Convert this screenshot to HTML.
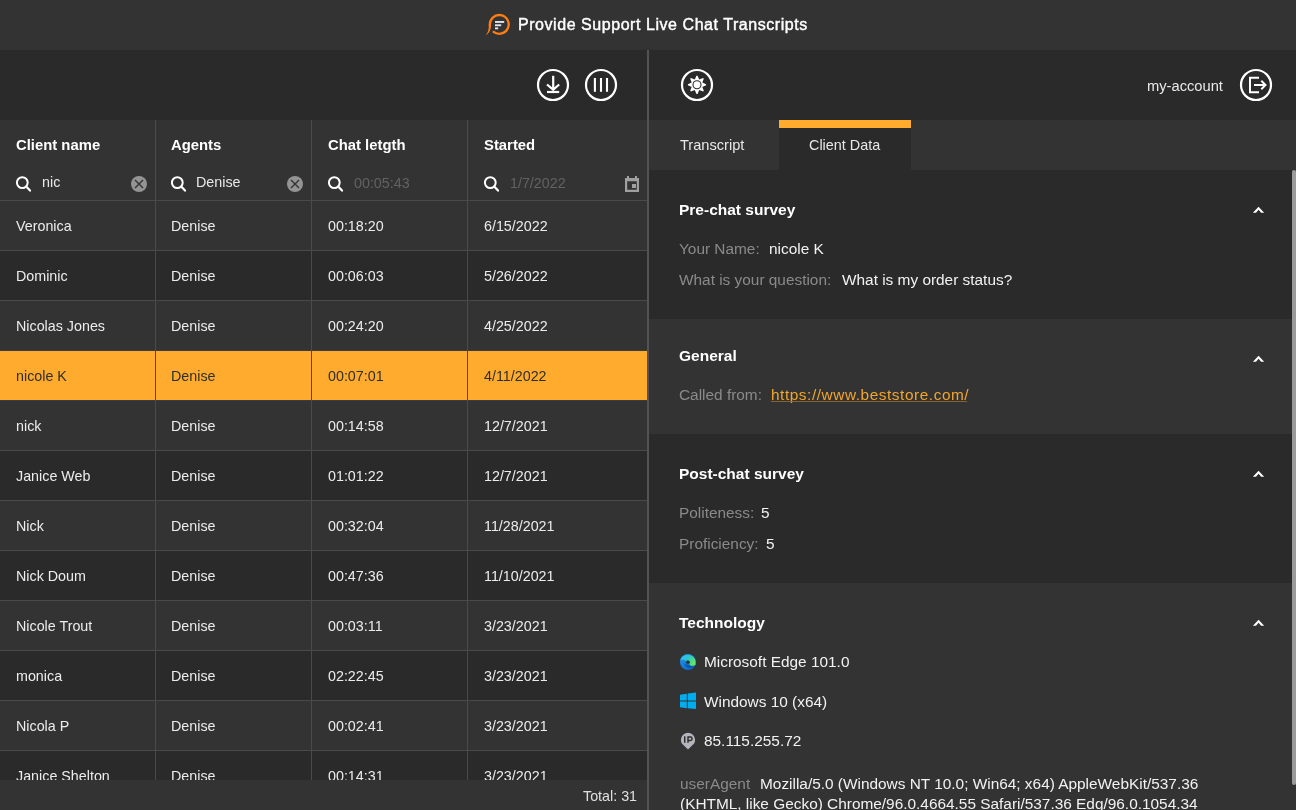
<!DOCTYPE html><html><head><meta charset="utf-8"><style>
html,body{margin:0;padding:0;}
body{width:1296px;height:810px;overflow:hidden;position:relative;background:#2a2a2a;font-family:"Liberation Sans",sans-serif;}
.t{position:absolute;line-height:1;white-space:pre;will-change:transform;}
.r{position:absolute;}
svg{position:absolute;overflow:visible;}
</style></head><body>
<div class="r" style="left:0px;top:0px;width:1296px;height:50px;background:#333333;"></div>
<svg style="left:0;top:0" width="1296" height="50">
<path d="M493.6 31.9 A9.4 9.4 0 1 0 489.9 25.3" fill="none" stroke="#ff7d13" stroke-width="2.3" stroke-linecap="round"/>
<path d="M488.75 24.8 C488.9 29.5 488.2 32.4 485.7 35.2 C488.8 33.4 490.9 30.6 491.05 25.2 Z" fill="#ff7d13"/>
<rect x="495" y="21" width="9.2" height="1.9" fill="#dfe3ec"/>
<rect x="495" y="24.3" width="6.2" height="1.9" fill="#dfe3ec"/>
<rect x="495" y="27.4" width="3.2" height="1.9" fill="#dfe3ec"/>
</svg>
<div class="t " style="left:518px;top:17.46px;font-size:16px;color:#ffffff;font-weight:400;letter-spacing:0.55px;-webkit-text-stroke:0.42px #fff;">Provide Support Live Chat Transcripts</div>
<div class="r" style="left:0px;top:50px;width:647px;height:70px;background:#2a2a2a;"></div>
<div class="r" style="left:649px;top:50px;width:647px;height:70px;background:#2a2a2a;"></div>
<div class="r" style="left:647px;top:50px;width:2px;height:760px;background:#535353;"></div>
<svg style="left:0;top:0" width="1296" height="120">
<circle cx="553" cy="85" r="15" fill="none" stroke="#fff" stroke-width="2.2"/>
<line x1="553.2" y1="75.8" x2="553.2" y2="89" stroke="#fff" stroke-width="2.2"/>
<polyline points="547,84.5 553.2,89.7 559.2,84.5" fill="none" stroke="#fff" stroke-width="2.2"/>
<line x1="547" y1="92" x2="559.2" y2="92" stroke="#fff" stroke-width="2.2"/>
<circle cx="601" cy="85" r="15" fill="none" stroke="#fff" stroke-width="2.2"/>
<line x1="594.9" y1="78" x2="594.9" y2="91.8" stroke="#fff" stroke-width="2.1"/>
<line x1="601" y1="78" x2="601" y2="91.8" stroke="#fff" stroke-width="2.1"/>
<line x1="607" y1="78" x2="607" y2="91.8" stroke="#fff" stroke-width="2.1"/>
<circle cx="697" cy="85" r="15" fill="none" stroke="#fff" stroke-width="2.2"/>
<g transform="translate(697 84.8)">
<path d="M-2.20,-5.31 L-0.56,-9.08 L0.56,-9.08 L2.20,-5.31 L6.03,-6.82 L6.82,-6.03 L5.31,-2.20 L9.08,-0.56 L9.08,0.56 L5.31,2.20 L6.82,6.03 L6.03,6.82 L2.20,5.31 L0.56,9.08 L-0.56,9.08 L-2.20,5.31 L-6.03,6.82 L-6.82,6.03 L-5.31,2.20 L-9.08,0.56 L-9.08,-0.56 L-5.31,-2.20 L-6.82,-6.03 L-6.03,-6.82 Z" fill="#fff"/>
<circle r="4.55" fill="#2a2a2a"/>
<circle r="3.45" fill="#fff"/>
</g>
<circle cx="1256" cy="85" r="15" fill="none" stroke="#fff" stroke-width="2.2"/>
<polyline points="1259,77.8 1250,77.8 1250,92.2 1259,92.2" fill="none" stroke="#fff" stroke-width="2"/>
<line x1="1254" y1="85" x2="1265" y2="85" stroke="#fff" stroke-width="2"/>
<polyline points="1261.3,80.8 1265.5,85 1261.3,89.2" fill="none" stroke="#fff" stroke-width="2"/>
</svg>
<div class="t " style="left:1147px;top:79.16px;font-size:14.7px;color:#e8e8e8;font-weight:400;">my-account</div>
<div class="r" style="left:0px;top:120px;width:647px;height:80px;background:#333333;"></div>
<div class="t " style="left:16px;top:138.13px;font-size:14.85px;color:#ffffff;font-weight:700;">Client name</div>
<div class="t " style="left:171px;top:138.13px;font-size:14.85px;color:#ffffff;font-weight:700;">Agents</div>
<div class="t " style="left:328px;top:138.13px;font-size:14.85px;color:#ffffff;font-weight:700;">Chat letgth</div>
<div class="t " style="left:484px;top:138.13px;font-size:14.85px;color:#ffffff;font-weight:700;">Started</div>
<div class="r" style="left:0px;top:200px;width:647px;height:50px;background:#333333;"></div>
<div class="t " style="left:16px;top:218.90px;font-size:14.3px;color:#ececec;font-weight:400;">Veronica</div>
<div class="t " style="left:171px;top:218.90px;font-size:14.3px;color:#ececec;font-weight:400;">Denise</div>
<div class="t " style="left:328px;top:218.90px;font-size:14.3px;color:#ececec;font-weight:400;">00:18:20</div>
<div class="t " style="left:484px;top:218.90px;font-size:14.3px;color:#ececec;font-weight:400;">6/15/2022</div>
<div class="r" style="left:0px;top:250px;width:647px;height:50px;background:#2a2a2a;"></div>
<div class="t " style="left:16px;top:268.90px;font-size:14.3px;color:#ececec;font-weight:400;">Dominic</div>
<div class="t " style="left:171px;top:268.90px;font-size:14.3px;color:#ececec;font-weight:400;">Denise</div>
<div class="t " style="left:328px;top:268.90px;font-size:14.3px;color:#ececec;font-weight:400;">00:06:03</div>
<div class="t " style="left:484px;top:268.90px;font-size:14.3px;color:#ececec;font-weight:400;">5/26/2022</div>
<div class="r" style="left:0px;top:300px;width:647px;height:50px;background:#333333;"></div>
<div class="t " style="left:16px;top:318.90px;font-size:14.3px;color:#ececec;font-weight:400;">Nicolas Jones</div>
<div class="t " style="left:171px;top:318.90px;font-size:14.3px;color:#ececec;font-weight:400;">Denise</div>
<div class="t " style="left:328px;top:318.90px;font-size:14.3px;color:#ececec;font-weight:400;">00:24:20</div>
<div class="t " style="left:484px;top:318.90px;font-size:14.3px;color:#ececec;font-weight:400;">4/25/2022</div>
<div class="r" style="left:0px;top:350px;width:647px;height:50px;background:#ffac2e;"></div>
<div class="t " style="left:16px;top:368.90px;font-size:14.3px;color:#2e2e2e;font-weight:400;">nicole K</div>
<div class="t " style="left:171px;top:368.90px;font-size:14.3px;color:#2e2e2e;font-weight:400;">Denise</div>
<div class="t " style="left:328px;top:368.90px;font-size:14.3px;color:#2e2e2e;font-weight:400;">00:07:01</div>
<div class="t " style="left:484px;top:368.90px;font-size:14.3px;color:#2e2e2e;font-weight:400;">4/11/2022</div>
<div class="r" style="left:0px;top:400px;width:647px;height:50px;background:#333333;"></div>
<div class="t " style="left:16px;top:418.90px;font-size:14.3px;color:#ececec;font-weight:400;">nick</div>
<div class="t " style="left:171px;top:418.90px;font-size:14.3px;color:#ececec;font-weight:400;">Denise</div>
<div class="t " style="left:328px;top:418.90px;font-size:14.3px;color:#ececec;font-weight:400;">00:14:58</div>
<div class="t " style="left:484px;top:418.90px;font-size:14.3px;color:#ececec;font-weight:400;">12/7/2021</div>
<div class="r" style="left:0px;top:450px;width:647px;height:50px;background:#2a2a2a;"></div>
<div class="t " style="left:16px;top:468.90px;font-size:14.3px;color:#ececec;font-weight:400;">Janice Web</div>
<div class="t " style="left:171px;top:468.90px;font-size:14.3px;color:#ececec;font-weight:400;">Denise</div>
<div class="t " style="left:328px;top:468.90px;font-size:14.3px;color:#ececec;font-weight:400;">01:01:22</div>
<div class="t " style="left:484px;top:468.90px;font-size:14.3px;color:#ececec;font-weight:400;">12/7/2021</div>
<div class="r" style="left:0px;top:500px;width:647px;height:50px;background:#333333;"></div>
<div class="t " style="left:16px;top:518.90px;font-size:14.3px;color:#ececec;font-weight:400;">Nick</div>
<div class="t " style="left:171px;top:518.90px;font-size:14.3px;color:#ececec;font-weight:400;">Denise</div>
<div class="t " style="left:328px;top:518.90px;font-size:14.3px;color:#ececec;font-weight:400;">00:32:04</div>
<div class="t " style="left:484px;top:518.90px;font-size:14.3px;color:#ececec;font-weight:400;">11/28/2021</div>
<div class="r" style="left:0px;top:550px;width:647px;height:50px;background:#2a2a2a;"></div>
<div class="t " style="left:16px;top:568.90px;font-size:14.3px;color:#ececec;font-weight:400;">Nick Doum</div>
<div class="t " style="left:171px;top:568.90px;font-size:14.3px;color:#ececec;font-weight:400;">Denise</div>
<div class="t " style="left:328px;top:568.90px;font-size:14.3px;color:#ececec;font-weight:400;">00:47:36</div>
<div class="t " style="left:484px;top:568.90px;font-size:14.3px;color:#ececec;font-weight:400;">11/10/2021</div>
<div class="r" style="left:0px;top:600px;width:647px;height:50px;background:#333333;"></div>
<div class="t " style="left:16px;top:618.90px;font-size:14.3px;color:#ececec;font-weight:400;">Nicole Trout</div>
<div class="t " style="left:171px;top:618.90px;font-size:14.3px;color:#ececec;font-weight:400;">Denise</div>
<div class="t " style="left:328px;top:618.90px;font-size:14.3px;color:#ececec;font-weight:400;">00:03:11</div>
<div class="t " style="left:484px;top:618.90px;font-size:14.3px;color:#ececec;font-weight:400;">3/23/2021</div>
<div class="r" style="left:0px;top:650px;width:647px;height:50px;background:#2a2a2a;"></div>
<div class="t " style="left:16px;top:668.90px;font-size:14.3px;color:#ececec;font-weight:400;">monica</div>
<div class="t " style="left:171px;top:668.90px;font-size:14.3px;color:#ececec;font-weight:400;">Denise</div>
<div class="t " style="left:328px;top:668.90px;font-size:14.3px;color:#ececec;font-weight:400;">02:22:45</div>
<div class="t " style="left:484px;top:668.90px;font-size:14.3px;color:#ececec;font-weight:400;">3/23/2021</div>
<div class="r" style="left:0px;top:700px;width:647px;height:50px;background:#333333;"></div>
<div class="t " style="left:16px;top:718.90px;font-size:14.3px;color:#ececec;font-weight:400;">Nicola P</div>
<div class="t " style="left:171px;top:718.90px;font-size:14.3px;color:#ececec;font-weight:400;">Denise</div>
<div class="t " style="left:328px;top:718.90px;font-size:14.3px;color:#ececec;font-weight:400;">00:02:41</div>
<div class="t " style="left:484px;top:718.90px;font-size:14.3px;color:#ececec;font-weight:400;">3/23/2021</div>
<div class="r" style="left:0px;top:750px;width:647px;height:50px;background:#2a2a2a;"></div>
<div class="t " style="left:16px;top:768.90px;font-size:14.3px;color:#ececec;font-weight:400;">Janice Shelton</div>
<div class="t " style="left:171px;top:768.90px;font-size:14.3px;color:#ececec;font-weight:400;">Denise</div>
<div class="t " style="left:328px;top:768.90px;font-size:14.3px;color:#ececec;font-weight:400;">00:14:31</div>
<div class="t " style="left:484px;top:768.90px;font-size:14.3px;color:#ececec;font-weight:400;">3/23/2021</div>
<div class="r" style="left:0px;top:200px;width:647px;height:1px;background:#4a4a4a;"></div>
<div class="r" style="left:0px;top:250px;width:647px;height:1px;background:#4a4a4a;"></div>
<div class="r" style="left:0px;top:300px;width:647px;height:1px;background:#4a4a4a;"></div>
<div class="r" style="left:0px;top:350px;width:647px;height:1px;background:#3a3d44;"></div>
<div class="r" style="left:0px;top:400px;width:647px;height:1px;background:#3a3d44;"></div>
<div class="r" style="left:0px;top:450px;width:647px;height:1px;background:#4a4a4a;"></div>
<div class="r" style="left:0px;top:500px;width:647px;height:1px;background:#4a4a4a;"></div>
<div class="r" style="left:0px;top:550px;width:647px;height:1px;background:#4a4a4a;"></div>
<div class="r" style="left:0px;top:600px;width:647px;height:1px;background:#4a4a4a;"></div>
<div class="r" style="left:0px;top:650px;width:647px;height:1px;background:#4a4a4a;"></div>
<div class="r" style="left:0px;top:700px;width:647px;height:1px;background:#4a4a4a;"></div>
<div class="r" style="left:0px;top:750px;width:647px;height:1px;background:#4a4a4a;"></div>
<div class="r" style="left:155px;top:120px;width:1px;height:660px;background:#4a4a4a;"></div>
<div class="r" style="left:155px;top:351px;width:1px;height:49px;background:#484848;"></div>
<div class="r" style="left:311px;top:120px;width:1px;height:660px;background:#4a4a4a;"></div>
<div class="r" style="left:311px;top:351px;width:1px;height:49px;background:#484848;"></div>
<div class="r" style="left:467px;top:120px;width:1px;height:660px;background:#4a4a4a;"></div>
<div class="r" style="left:467px;top:351px;width:1px;height:49px;background:#484848;"></div>
<svg style="left:0;top:0" width="647" height="200"><circle cx="22.3" cy="182.6" r="5.4" fill="none" stroke="#fff" stroke-width="2"/><line x1="26.2" y1="186.6" x2="30" y2="190.6" stroke="#fff" stroke-width="2.2" stroke-linecap="round"/><circle cx="177.3" cy="182.6" r="5.4" fill="none" stroke="#fff" stroke-width="2"/><line x1="181.2" y1="186.6" x2="185" y2="190.6" stroke="#fff" stroke-width="2.2" stroke-linecap="round"/><circle cx="334.3" cy="182.6" r="5.4" fill="none" stroke="#fff" stroke-width="2"/><line x1="338.2" y1="186.6" x2="342" y2="190.6" stroke="#fff" stroke-width="2.2" stroke-linecap="round"/><circle cx="490.3" cy="182.6" r="5.4" fill="none" stroke="#fff" stroke-width="2"/><line x1="494.2" y1="186.6" x2="498" y2="190.6" stroke="#fff" stroke-width="2.2" stroke-linecap="round"/><circle cx="139" cy="184" r="8" fill="#949494"/><path d="M135 180 L143 188 M143 180 L135 188" stroke="#333" stroke-width="1.4"/><circle cx="295" cy="184" r="8" fill="#949494"/><path d="M291 180 L299 188 M299 180 L291 188" stroke="#333" stroke-width="1.4"/><path d="M625 178 H639 V192 H625 Z M627.2 181.2 V189.8 H636.8 V181.2 Z" fill="#a0a0a0" fill-rule="evenodd"/><rect x="627" y="176" width="2" height="2.5" fill="#a0a0a0"/><rect x="635" y="176" width="2" height="2.5" fill="#a0a0a0"/><rect x="632" y="184" width="4" height="4" fill="#a0a0a0"/></svg>
<div class="t " style="left:41.5px;top:174.90px;font-size:14.3px;color:#e8e8e8;font-weight:400;">nic</div>
<div class="t " style="left:196px;top:174.90px;font-size:14.3px;color:#e8e8e8;font-weight:400;">Denise</div>
<div class="t " style="left:354px;top:176.40px;font-size:14.3px;color:#626262;font-weight:400;">00:05:43</div>
<div class="t " style="left:510px;top:176.40px;font-size:14.3px;color:#626262;font-weight:400;">1/7/2022</div>
<div class="r" style="left:0px;top:780px;width:647px;height:30px;background:#333333;"></div>
<div class="t" style="right:659px;top:788.90px;font-size:14.3px;color:#e0e0e0">Total: 31</div>
<div class="r" style="left:649px;top:120px;width:647px;height:50px;background:#333333;"></div>
<div class="r" style="left:779px;top:120px;width:132px;height:50px;background:#2a2a2a;"></div>
<div class="r" style="left:779px;top:120px;width:132px;height:8px;background:#ffac2e;"></div>
<div class="t " style="left:680.4px;top:137.64px;font-size:14.6px;color:#e8e8e8;font-weight:400;">Transcript</div>
<div class="t " style="left:809.3px;top:137.81px;font-size:14.4px;color:#e8e8e8;font-weight:400;">Client Data</div>
<div class="r" style="left:649px;top:170px;width:643px;height:149px;background:#2a2a2a;"></div>
<div class="r" style="left:649px;top:319px;width:643px;height:115px;background:#333333;"></div>
<div class="r" style="left:649px;top:434px;width:643px;height:149px;background:#2a2a2a;"></div>
<div class="r" style="left:649px;top:583px;width:643px;height:227px;background:#333333;"></div>
<div class="r" style="left:1292px;top:170px;width:4px;height:640px;background:#333333;"></div>
<div class="r" style="left:1292px;top:170px;width:4px;height:615px;background:#9a9a9a;border-radius:2px;"></div>
<svg style="left:0;top:0" width="1296" height="810"><path d="M1252.9 212.7 L1258.55 206.7 L1264.2 212.7 L1261.1 212.7 L1258.55 209.8 L1256 212.7 Z" fill="#fff"/><path d="M1252.9 361.7 L1258.55 355.7 L1264.2 361.7 L1261.1 361.7 L1258.55 358.8 L1256 361.7 Z" fill="#fff"/><path d="M1252.9 476.7 L1258.55 470.7 L1264.2 476.7 L1261.1 476.7 L1258.55 473.8 L1256 476.7 Z" fill="#fff"/><path d="M1252.9 625.7 L1258.55 619.7 L1264.2 625.7 L1261.1 625.7 L1258.55 622.8 L1256 625.7 Z" fill="#fff"/></svg>
<div class="t " style="left:678.8px;top:201.88px;font-size:15.5px;color:#ffffff;font-weight:700;">Pre-chat survey</div>
<div class="t " style="left:678.8px;top:347.88px;font-size:15.5px;color:#ffffff;font-weight:700;">General</div>
<div class="t " style="left:678.8px;top:465.88px;font-size:15.5px;color:#ffffff;font-weight:700;">Post-chat survey</div>
<div class="t " style="left:678.8px;top:614.88px;font-size:15.5px;color:#ffffff;font-weight:700;">Technology</div>
<div class="t " style="left:678.8px;top:240.96px;font-size:15.4px;color:#8a8a8a;font-weight:400;">Your Name:</div>
<div class="t " style="left:768.5px;top:240.96px;font-size:15.4px;color:#f2f2f2;font-weight:400;">nicole K</div>
<div class="t " style="left:678.8px;top:271.96px;font-size:15.4px;color:#8a8a8a;font-weight:400;">What is your question:</div>
<div class="t " style="left:842.3px;top:271.96px;font-size:15.4px;color:#f2f2f2;font-weight:400;">What is my order status?</div>
<div class="t " style="left:678.8px;top:386.96px;font-size:15.4px;color:#8a8a8a;font-weight:400;">Called from:</div>
<div class="t " style="left:771.2px;top:386.96px;font-size:15.4px;color:#f2a62e;font-weight:400;letter-spacing:0.55px;">https://www.beststore.com/</div>
<div class="r" style="left:771px;top:401px;width:196px;height:1px;background:#8a6228;"></div>
<div class="t " style="left:678.8px;top:504.96px;font-size:15.4px;color:#8a8a8a;font-weight:400;">Politeness:</div>
<div class="t " style="left:761.3px;top:504.96px;font-size:15.4px;color:#f2f2f2;font-weight:400;">5</div>
<div class="t " style="left:678.8px;top:535.96px;font-size:15.4px;color:#8a8a8a;font-weight:400;">Proficiency:</div>
<div class="t " style="left:765.8px;top:535.96px;font-size:15.4px;color:#f2f2f2;font-weight:400;">5</div>
<div class="t " style="left:703.5px;top:653.96px;font-size:15.4px;color:#f2f2f2;font-weight:400;">Microsoft Edge 101.0</div>
<div class="t " style="left:703.8px;top:693.96px;font-size:15.4px;color:#f2f2f2;font-weight:400;">Windows 10 (x64)</div>
<div class="t " style="left:703.8px;top:733.46px;font-size:15.4px;color:#f2f2f2;font-weight:400;">85.115.255.72</div>
<div class="t " style="left:680.4px;top:775.96px;font-size:15.4px;color:#8a8a8a;font-weight:400;">userAgent</div>
<div class="t " style="left:759.8px;top:775.96px;font-size:15.4px;color:#f2f2f2;font-weight:400;">Mozilla/5.0 (Windows NT 10.0; Win64; x64) AppleWebKit/537.36</div>
<div class="t " style="left:680.4px;top:795.96px;font-size:15.4px;color:#f2f2f2;font-weight:400;">(KHTML, like Gecko) Chrome/96.0.4664.55 Safari/537.36 Edg/96.0.1054.34</div>
<svg style="left:0;top:0" width="1296" height="810">
<defs>
<linearGradient id="eg1" x1="0" y1="0" x2="1" y2="0.6"><stop offset="0" stop-color="#2ec9f2"/><stop offset="0.45" stop-color="#2cc2d8"/><stop offset="0.75" stop-color="#48d98a"/><stop offset="1" stop-color="#64e868"/></linearGradient>
<linearGradient id="eg2" x1="0" y1="0.2" x2="0.7" y2="1"><stop offset="0" stop-color="#1f95ea"/><stop offset="1" stop-color="#0d66c6"/></linearGradient>
</defs>
<g transform="translate(680 654)">
<circle cx="8" cy="8" r="8" fill="url(#eg2)"/>
<path d="M0.2 6.2 A8 8 0 0 1 15.6 10.4 C14.8 12 12 12.2 10.6 11.4 C9.7 10.9 9.3 10.2 9.6 9.2 A1.9 1.9 0 0 0 6.2 7.2 C5 6.1 3 5.4 0.2 6.2 Z" fill="url(#eg1)"/>
<path d="M4.4 9.4 C4.8 13 9 14.9 12.6 13.3 C14 12.6 15 11.6 15.6 10.4 C14.5 12.2 12 12.6 10.2 11.8 C8.4 11 6.4 10.6 4.4 9.4 Z" fill="#0b4f9e" opacity="0.75"/>
<circle cx="7.9" cy="8.2" r="1.75" fill="#333"/>
</g>
<g fill="#00adef">
<path d="M680 694.8 L686.8 693.8 L686.8 700.6 L680 700.6 Z"/>
<path d="M687.8 693.6 L696 692.6 L696 700.6 L687.8 700.6 Z"/>
<path d="M680 701.6 L686.8 701.6 L686.8 708.2 L680 707.3 Z"/>
<path d="M687.8 701.6 L696 701.6 L696 709 L687.8 708.3 Z"/>
</g>
<path d="M688 749.4 L682.1 743.7 A7.05 7.05 0 1 1 693.9 743.7 Z" fill="#b4b4bc"/>
<rect x="684" y="736.3" width="1.45" height="6.5" fill="#2e2e2e"/>
<path d="M688 742.8 V737 H690.4 A1.7 1.7 0 0 1 690.4 740.4 H688.6" fill="none" stroke="#2e2e2e" stroke-width="1.45"/>
</svg>
</body></html>
